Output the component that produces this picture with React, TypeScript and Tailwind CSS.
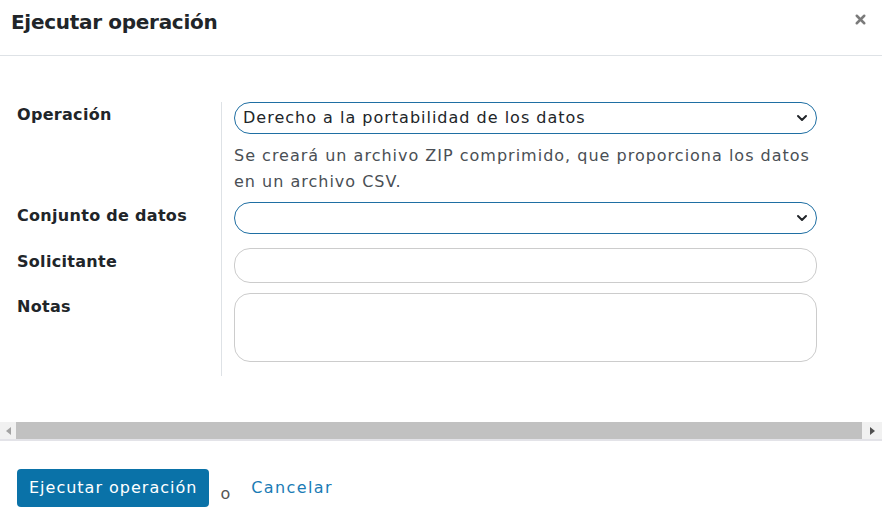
import { X, ChevronDown } from "lucide-react";

const font = { fontFamily: '"DejaVu Sans", "Open Sans", sans-serif' };

function Label({ children }: { children: React.ReactNode }) {
  return <div className="text-[16px] font-bold text-[#212529] leading-[24px] tracking-[0.3px]">{children}</div>;
}

function SelectBox({ value }: { value?: string }) {
  return (
    <div className="h-[32px] w-full rounded-[16px] border border-[#1f6fa3] flex items-center justify-between pl-[8px] pr-[6px] text-[16px] tracking-[1px] text-[#212529]">
      <span>{value}</span>
      <ChevronDown size={16} strokeWidth={3} className="text-[#212529]" />
    </div>
  );
}

export default function App() {
  return (
    <div className="w-[882px] h-[527px] bg-white overflow-hidden" style={font}>
      {/* header */}
      <div className="h-[56px] border-b border-[#dee2e6] flex items-start justify-between pl-[11px] pr-[14px] pt-[7px]">
        <h1 className="text-[20px] font-bold text-[#212529] leading-[30px] tracking-[-0.3px]">Ejecutar operación</h1>
        <X size={15} strokeWidth={4} className="text-[#7b7b7b] mt-[5px]" />
      </div>

      {/* body */}
      <div className="pt-[46px] pl-[17px] pr-[65px] flex">
        <div className="w-[205px] border-r border-[#dee2e6] flex flex-col pb-[14px]">
          <div className="pt-[1px] h-[102px]"><Label>Operación</Label></div>
          <div className="h-[46px]"><Label>Conjunto de datos</Label></div>
          <div className="h-[45px]"><Label>Solicitante</Label></div>
          <div><Label>Notas</Label></div>
        </div>
        <div className="flex-1 pl-[12px] flex flex-col pb-[14px]">
          <SelectBox value="Derecho a la portabilidad de los datos" />
          <p className="text-[16px] tracking-[1px] text-[#4a4f55] leading-[26px] mt-[9px] mb-[7px]">
            Se creará un archivo ZIP comprimido, que proporciona los datos<br />en un archivo CSV.
          </p>
          <SelectBox />
          <div className="h-[35px] mt-[14px] rounded-[16px] border border-[#cccccc]" />
          <div className="h-[69px] mt-[10px] rounded-[16px] border border-[#cccccc]" />
        </div>
      </div>

      {/* scrollbar */}
      <div className="mt-[46px] h-[19px] bg-[#f1f1f1] flex items-center border-b-2 border-[#e3e3e8]">
        <div className="w-[16px] flex justify-center text-[#a3a3a3]">
          <svg width="5" height="8" viewBox="0 0 5 8"><path d="M5 0 L0 4 L5 8 Z" fill="currentColor" /></svg>
        </div>
        <div className="flex-1 h-[17px] bg-[#c1c1c1]" />
        <div className="w-[20px] flex justify-center text-[#505050]">
          <svg width="5" height="8" viewBox="0 0 5 8"><path d="M0 0 L5 4 L0 8 Z" fill="currentColor" /></svg>
        </div>
      </div>

      {/* footer */}
      <div className="pt-[28px] pl-[17px] flex items-end gap-[11px]">
        <button className="h-[38px] px-[12px] rounded-[4px] bg-[#0a72a8] text-white text-[16px] tracking-[1px] leading-[24px]">
          Ejecutar operación
        </button>
        <span className="text-[16px] text-[#555] leading-[24px] mb-[1px]">o</span>
        <a className="text-[16px] tracking-[1.4px] text-[#1a7bb5] leading-[24px] ml-[10px] pb-[7px]">Cancelar</a>
      </div>
    </div>
  );
}
